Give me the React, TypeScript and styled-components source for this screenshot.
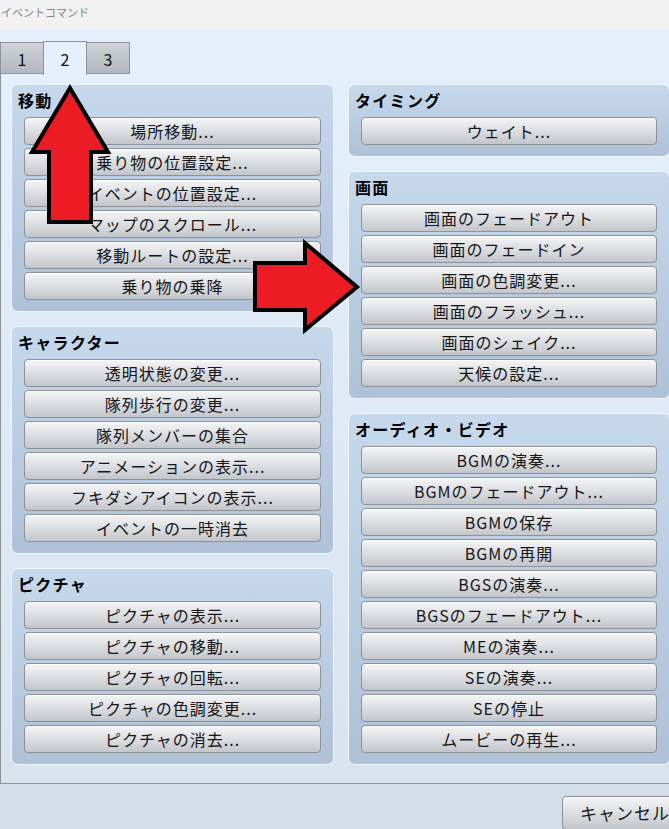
import React from 'react'
import styled, { createGlobalStyle } from 'styled-components'

const FONT = `'Noto Sans CJK JP', 'Noto Sans', sans-serif`

const GlobalStyle = createGlobalStyle`
  html, body {
    margin: 0;
    padding: 0;
    overflow: hidden;
    background: #d2dde8;
  }
  body {
    font-family: ${FONT};
  }
`

// dialog frame
const Window = styled.div`
  position: relative;
  width: 690px;
  height: 829px;
  display: flex;
  flex-direction: column;
  overflow: hidden;
  font-family: ${FONT};
`

const TitleBar = styled.div`
  height: 29px;
  flex: none;
  box-sizing: border-box;
  background: #f1f1f1;
  color: #858585;
  font-size: 11px;
  line-height: 24px;
  padding-left: 1px;
`

// tabs
const TabStrip = styled.div`
  height: 45px;
  flex: none;
  display: flex;
  align-items: flex-end;
  background: #e5effb;
  position: relative;
  z-index: 1;
`

type TabProps = { $active?: boolean }
const Tab = styled.div<TabProps>`
  width: 44px;
  height: ${(p) => (p.$active ? '34px' : '32px')};
  margin-bottom: ${(p) => (p.$active ? '-1px' : '0')};
  margin-left: -1px;
  box-sizing: border-box;
  border: 1px solid #8d9298;
  border-bottom: ${(p) => (p.$active ? 'none' : '1px solid #8d9298')};
  background: ${(p) =>
    p.$active ? '#e5f0fc' : 'linear-gradient(#cfd3d8, #b2b8bf)'};
  display: flex;
  align-items: center;
  justify-content: center;
  padding-top: ${(p) => (p.$active ? '0' : '1px')};
  font-size: 16px;
  color: #111;
  &:first-child {
    margin-left: 0;
  }
`

const TabPage = styled.div`
  height: 711px;
  flex: none;
  box-sizing: border-box;
  border: 1px solid #8d9298;
  border-right: none;
  margin-top: -1px;
  background: linear-gradient(#e4effc, #d8e3ee);
  padding: 10px 0 0 10px;
`

const Columns = styled.div`
  display: grid;
  grid-template-columns: 323px 322px;
  column-gap: 14px;
  align-items: start;
`

const Column = styled.div`
  display: flex;
  flex-direction: column;
  gap: 14px;
`

// group boxes
const Group = styled.section`
  box-sizing: border-box;
  border: 1px solid #f0f6fc;
  border-radius: 7px;
  background: linear-gradient(#c6d8ec, #aec1d6);
  padding: 5px 12px 11px 12px;
  display: flex;
  flex-direction: column;
  gap: 3px;
`

const GroupTitle = styled.h3`
  margin: 0 0 4px -6px;
  font-size: 16px;
  line-height: 20px;
  font-weight: bold;
  letter-spacing: 1.3px;
  color: #000;
`

const CommandButton = styled.button`
  height: 28px;
  width: 100%;
  margin: 0;
  padding: 0;
  box-sizing: border-box;
  border: 1px solid #8d9297;
  border-radius: 4px;
  background: linear-gradient(#f4f5f7, #c2c6cb);
  box-shadow: inset 0 1px 0 #ffffff;
  font-family: ${FONT};
  font-size: 16px;
  line-height: 26px;
  letter-spacing: 1px;
  color: #151515;
  text-align: center;
  cursor: pointer;
`

// footer
const Footer = styled.div`
  flex: 1;
  display: flex;
  justify-content: flex-end;
  align-items: flex-start;
  padding: 12px 9px 0 0;
  background: #d2dde8;
`

const CancelButton = styled(CommandButton)`
  width: 119px;
  height: 34px;
  font-size: 17px;
  line-height: 30px;
  text-align: left;
  padding-left: 17px;
`

const Overlay = styled.svg`
  position: absolute;
  left: 0;
  top: 0;
  pointer-events: none;
`

type GroupData = { title: string; items: string[] }

const left: GroupData[] = [
  {
    title: '移動',
    items: [
      '場所移動...',
      '乗り物の位置設定...',
      'イベントの位置設定...',
      'マップのスクロール...',
      '移動ルートの設定...',
      '乗り物の乗降',
    ],
  },
  {
    title: 'キャラクター',
    items: [
      '透明状態の変更...',
      '隊列歩行の変更...',
      '隊列メンバーの集合',
      'アニメーションの表示...',
      'フキダシアイコンの表示...',
      'イベントの一時消去',
    ],
  },
  {
    title: 'ピクチャ',
    items: [
      'ピクチャの表示...',
      'ピクチャの移動...',
      'ピクチャの回転...',
      'ピクチャの色調変更...',
      'ピクチャの消去...',
    ],
  },
]

const right: GroupData[] = [
  { title: 'タイミング', items: ['ウェイト...'] },
  {
    title: '画面',
    items: [
      '画面のフェードアウト',
      '画面のフェードイン',
      '画面の色調変更...',
      '画面のフラッシュ...',
      '画面のシェイク...',
      '天候の設定...',
    ],
  },
  {
    title: 'オーディオ・ビデオ',
    items: [
      'BGMの演奏...',
      'BGMのフェードアウト...',
      'BGMの保存',
      'BGMの再開',
      'BGSの演奏...',
      'BGSのフェードアウト...',
      'MEの演奏...',
      'SEの演奏...',
      'SEの停止',
      'ムービーの再生...',
    ],
  },
]

const CommandGroup: React.FC<GroupData> = ({ title, items }) => (
  <Group>
    <GroupTitle>{title}</GroupTitle>
    {items.map((label) => (
      <CommandButton key={label}>{label}</CommandButton>
    ))}
  </Group>
)

export default function App() {
  return (
    <>
      <GlobalStyle />
      <Window>
        <TitleBar>イベントコマンド</TitleBar>
        <TabStrip>
          <Tab>1</Tab>
          <Tab $active>2</Tab>
          <Tab>3</Tab>
        </TabStrip>
        <TabPage>
          <Columns>
            <Column>
              {left.map((g) => (
                <CommandGroup key={g.title} {...g} />
              ))}
            </Column>
            <Column>
              {right.map((g) => (
                <CommandGroup key={g.title} {...g} />
              ))}
            </Column>
          </Columns>
        </TabPage>
        <Footer>
          <CancelButton>キャンセル</CancelButton>
        </Footer>
        <Overlay width="690" height="829" viewBox="0 0 690 829">
          <polygon
            points="70,88 108,152 91,152 91,222 49,222 49,152 32,152"
            fill="#ed1c24"
            stroke="#000"
            strokeWidth="4"
            strokeLinejoin="miter"
          />
          <polygon
            points="255,263 305,263 305,243 357,287 305,330 305,310 255,310"
            fill="#ed1c24"
            stroke="#000"
            strokeWidth="4"
            strokeLinejoin="miter"
          />
        </Overlay>
      </Window>
    </>
  )
}
